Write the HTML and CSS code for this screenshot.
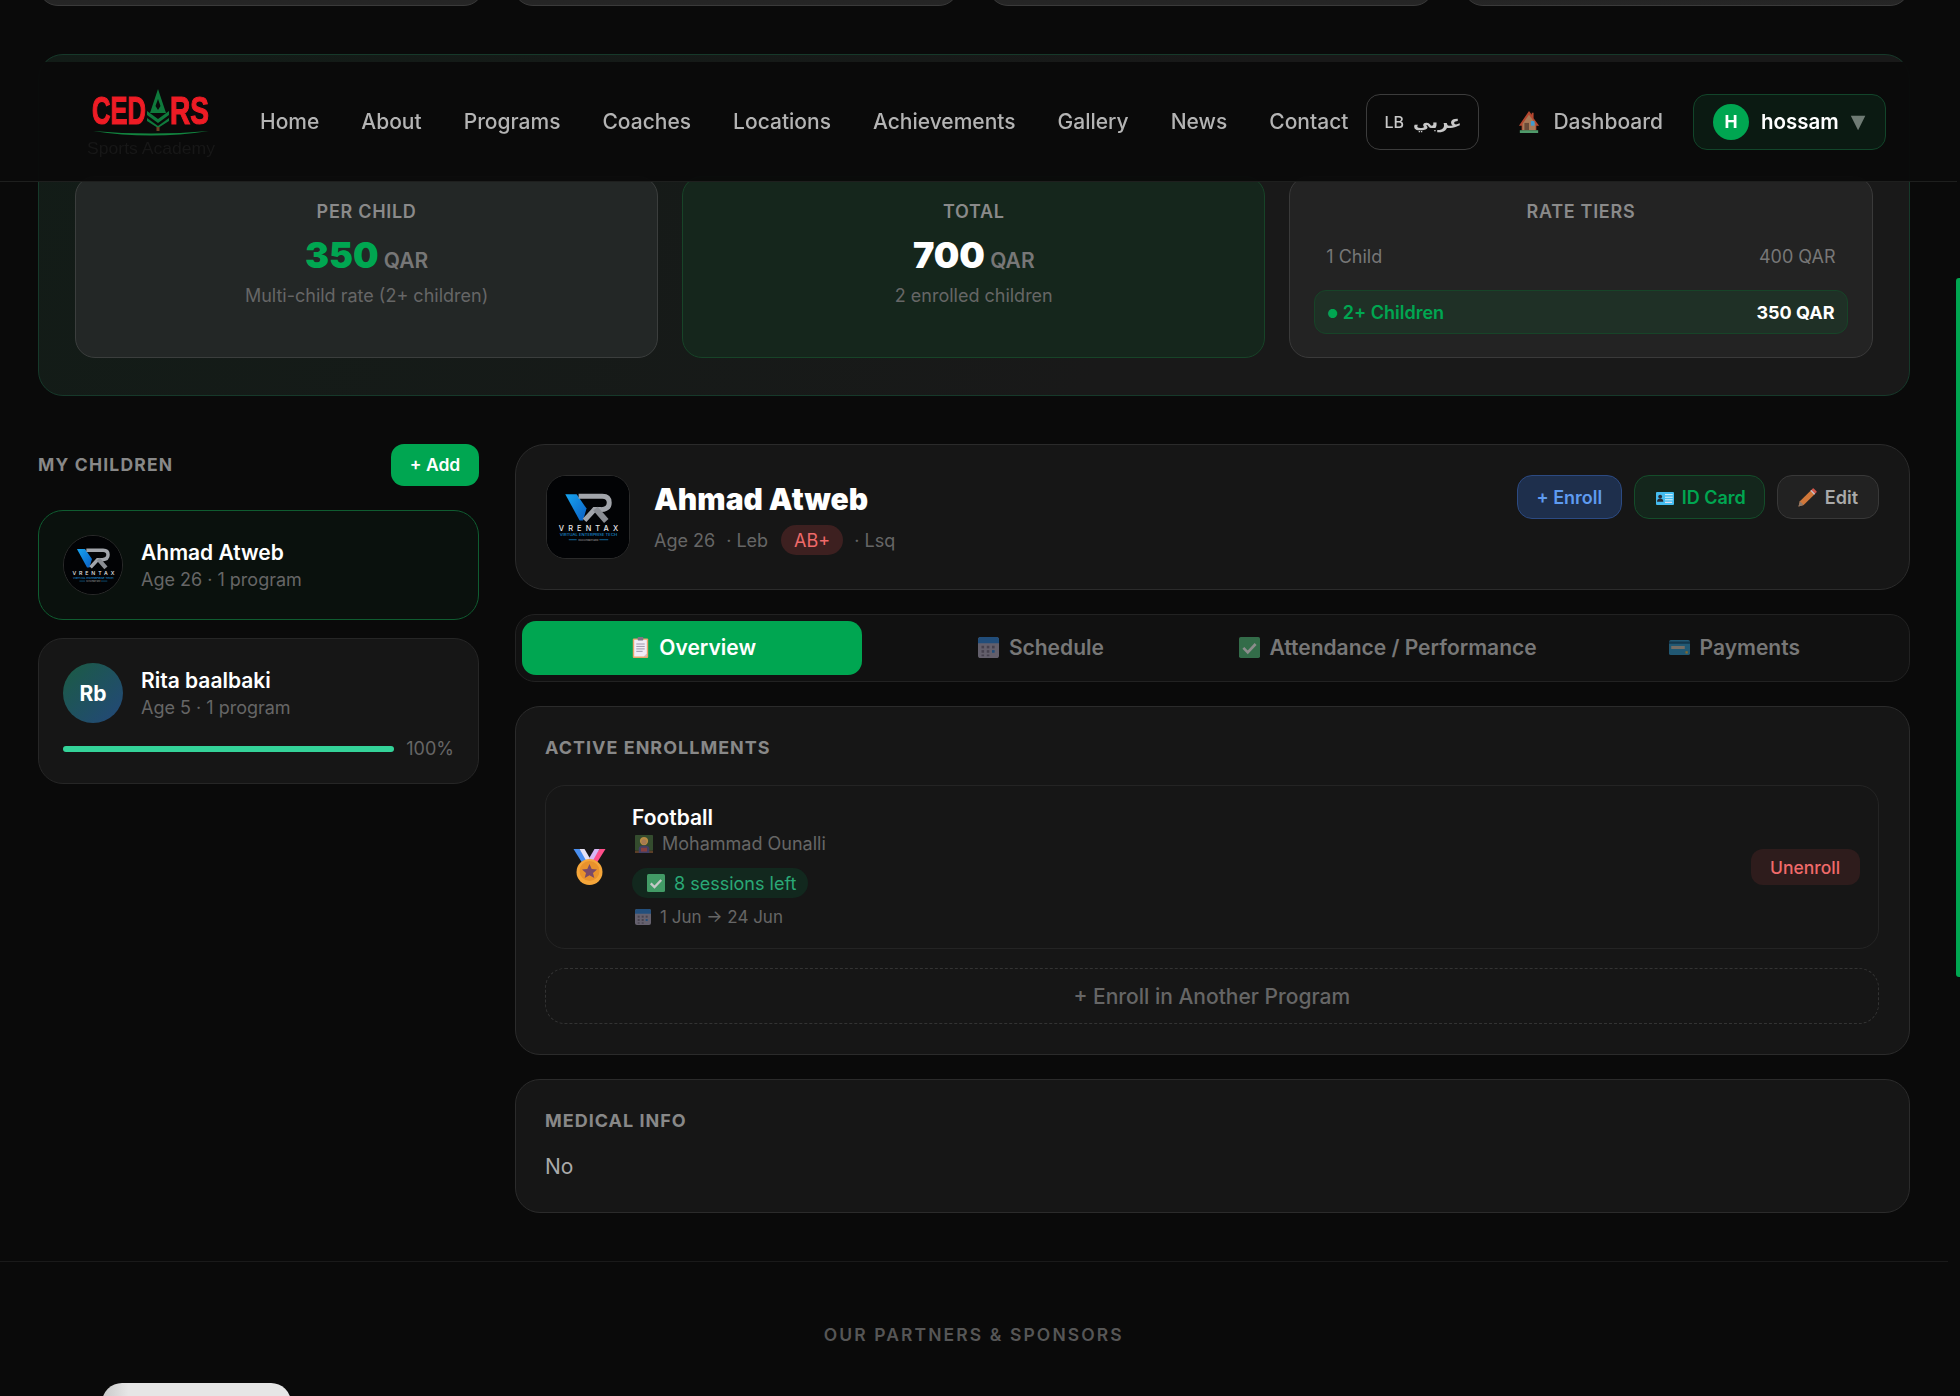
FILE: index.html
```html
<!DOCTYPE html>
<html lang="en">
<head>
    <meta charset="UTF-8">
    <meta name="viewport" content="width=device-width, initial-scale=1.0">
    <title>Cedars Sports Academy - Parent Dashboard</title>
    <link rel="stylesheet" href="styles.css">
</head>
<body>
    <!-- shared icons -->
    <svg class="defs" width="0" height="0">
        <defs>
            <linearGradient id="vrBlue" x1="0" y1="0" x2="1" y2="1">
                <stop offset="0" stop-color="#17a5f0"/>
                <stop offset="1" stop-color="#0b5fc4"/>
            </linearGradient>
            <symbol id="i-vr" viewBox="0 0 83 83">
                <rect width="83" height="83" fill="#020305"/>
                <polygon points="18.5,18.5 30,18.5 40,33 36.5,45 33,45" fill="url(#vrBlue)"/>
                <path d="M32 20.500H56Q63 20.500 63 27Q63 33.500 55 34H48L38 45" fill="none" stroke="#a2a5ab" stroke-width="5"/>
                <path d="M49 33L60 45.500" stroke="#8b8e94" stroke-width="6" fill="none"/>
                <text x="42" y="56" class="vr-name" text-anchor="middle" textLength="60" lengthAdjust="spacing">VRENTAX</text>
                <text x="42" y="61" class="vr-tag" text-anchor="middle" textLength="58" lengthAdjust="spacingAndGlyphs">VIRTUAL ENTERPRISE TECH</text>
                <path d="M22 64.500H30M53 64.500H62" stroke="#1b8fd6" stroke-width="0.700"/>
                <text x="42" y="65.500" class="vr-tag2" text-anchor="middle" textLength="20" lengthAdjust="spacingAndGlyphs">BUILD AUTOMATE GROW</text>
            </symbol>
            <symbol id="i-house" viewBox="0 0 24 24">
                <path d="M12 0L15 4V2H17V8L23 16H20V21H4V16H1Z" fill="#b4472f"/>
                <path d="M12 4L19 14V21H5V14Z" fill="#a97a58"/>
                <rect x="7" y="13" width="5" height="8" fill="#6a4a38"/>
                <rect x="14" y="11" width="4" height="5" fill="#3f9bd1"/>
                <rect x="2" y="21" width="20" height="3" fill="#4f9a6a"/>
            </symbol>
            <symbol id="i-clip" viewBox="0 0 24 30">
                <rect x="1" y="2" width="22" height="28" rx="1.500" fill="#e9a36b"/>
                <path d="M3 4H21V24L17 28H3Z" fill="#f0edf7"/>
                <path d="M21 24V28H17Z" fill="#c9c4d6"/>
                <rect x="8" y="0" width="8" height="5" rx="1" fill="#7d7585"/>
                <path d="M6 10H18M6 13.500H18M6 17H18M6 20.500H15" stroke="#8f89a0" stroke-width="1.200"/>
            </symbol>
            <symbol id="i-cal" viewBox="0 0 24 24">
                <rect width="24" height="24" rx="3" fill="#a79fb6"/>
                <path d="M0 7V3Q0 0 3 0H21Q24 0 24 3V7Z" fill="#2f7fd0"/>
                <g fill="#71697f">
                    <rect x="4" y="10" width="3" height="3"/><rect x="10" y="10" width="3" height="3"/><rect x="16" y="10" width="3" height="3"/>
                    <rect x="4" y="15" width="3" height="3"/><rect x="10" y="15" width="3" height="3"/><rect x="16" y="15" width="3" height="3" fill="#2f7fd0"/>
                    <rect x="4" y="20" width="3" height="2"/><rect x="10" y="20" width="3" height="2"/>
                </g>
            </symbol>
            <symbol id="i-check" viewBox="0 0 24 24">
                <rect width="24" height="24" rx="2" fill="#4fb878"/>
                <path d="M5 12.500L10 17.500L19 8" fill="none" stroke="#f2f2f2" stroke-width="3"/>
            </symbol>
            <symbol id="i-card" viewBox="0 0 28 20">
                <rect y="0" width="28" height="20" rx="2.500" fill="#2f93c4"/>
                <rect y="2" width="28" height="3" fill="#15557c"/>
                <rect x="3" y="8" width="18" height="4" fill="#c8b9a8"/>
                <rect x="22" y="15" width="3" height="3" fill="#e8b13c"/>
            </symbol>
            <symbol id="i-id" viewBox="0 0 28 20">
                <rect width="28" height="20" rx="1.500" fill="#45bdf0"/>
                <circle cx="6.500" cy="7" r="3" fill="#2a2a33"/>
                <path d="M1.500 15Q2 10 6.500 10Q11 10 11.500 15Z" fill="#2a2a33"/>
                <path d="M14 4H26M14 8H26M14 12H26" stroke="#fff" stroke-width="1.300"/>
                <rect x="14" y="15" width="11" height="2" fill="#dde"/>
            </symbol>
            <symbol id="i-pencil" viewBox="0 0 20 20">
                <path d="M0.500 19.500L2 14L13.500 2.500L17.500 6.500L6 18Z" fill="#d0773a"/>
                <path d="M0.500 19.500L2 14L6 18Z" fill="#8f7a6a"/>
                <path d="M13.500 2.500L15.500 0.500Q16 0 16.500 0.500L19.500 3.500Q20 4 19.500 4.500L17.500 6.500Z" fill="#d0564a"/>
                <path d="M13 3L17 7L18 6L14 2Z" fill="#c9c9d2"/>
            </symbol>
            <symbol id="i-medal" viewBox="0 0 32 36">
                <path d="M0 0H6L16 14L10 16Z" fill="#4a8ff0"/>
                <path d="M6 0H11L18 12L14 14Z" fill="#e6e3f5"/>
                <path d="M32 0H26L16 14L22 16Z" fill="#ff4f8a"/>
                <path d="M26 0H21L14 12L18 14Z" fill="#d7b8f5"/>
                <circle cx="16" cy="23" r="13" fill="#f5a63a"/>
                <circle cx="16" cy="22" r="10" fill="#e8922c"/>
                <polygon points="16,15 18.200,20 23.500,20.500 19.500,24 20.800,29 16,26.300 11.200,29 12.500,24 8.500,20.500 13.800,20" fill="#7a4a68"/>
            </symbol>
            <symbol id="i-teacher" viewBox="0 0 24 24">
                <rect width="24" height="21" rx="1" fill="#3c5a34"/>
                <rect y="21" width="24" height="3" fill="#6e4a2c"/>
                <circle cx="12" cy="8" r="5.500" fill="#e0a94f"/>
                <circle cx="12" cy="9" r="3.500" fill="#c99362"/>
                <path d="M5 24V18Q5 14 12 14Q19 14 19 18V24Z" fill="#4e4a78"/>
                <rect x="8" y="17" width="8" height="5" fill="#a34a4a"/>
            </symbol>
        </defs>
    </svg>

    <!-- fixed header, the page behind it is scrolled -->
    <header class="topnav">
        <a class="logo">
            <svg width="130" height="72" viewBox="0 0 130 72">
                <text x="5" y="38" class="logo-word" textLength="54" lengthAdjust="spacingAndGlyphs">CED</text>
                <text x="83" y="38" class="logo-word" textLength="39" lengthAdjust="spacingAndGlyphs">RS</text>
                <path d="M71 3L63 27H79Z" fill="#0f7a3c"/>
                <path d="M71 13L68.500 20L71 24L73.500 20Z" fill="#0a0c0b"/>
                <path d="M60 25L71 33L82 25V29L71 37L60 29Z" fill="#0f7a3c"/>
                <path d="M60 32L71 40L82 32V35L71 42L60 35Z" fill="#0f7a3c"/>
                <rect x="69.500" y="41" width="3" height="4" fill="#6a3f22"/>
                <path d="M6 45Q64 50 122 45Q64 54 6 45Z" fill="#12843f"/>
                <text x="0" y="68" class="logo-sub" textLength="128" lengthAdjust="spacingAndGlyphs">Sports Academy</text>
            </svg>
        </a>
        <nav class="links">
            <a>Home</a>
            <a>About</a>
            <a>Programs</a>
            <a>Coaches</a>
            <a>Locations</a>
            <a>Achievements</a>
            <a>Gallery</a>
            <a>News</a>
            <a>Contact</a>
        </nav>
        <button class="lang"><span class="lang-code">LB</span><span class="lang-ar">عربي</span></button>
        <a class="dash"><svg class="ic-house"><use href="#i-house"/></svg>Dashboard</a>
        <div class="profile">
            <span class="profile-av">H</span>
            <span class="profile-name">hossam</span>
            <span class="profile-caret">▼</span>
        </div>
    </header>

    <div class="thumb"></div>

    <div class="page">
        <div class="stat-row">
            <div class="stat"></div>
            <div class="stat"></div>
            <div class="stat"></div>
            <div class="stat"></div>
        </div>

        <section class="billing">
            <div class="billing-head"></div>
            <div class="billing-grid">
                <div class="bill-card">
                    <div class="bill-label">PER CHILD</div>
                    <div class="bill-value"><b class="green">350</b> <span>QAR</span></div>
                    <div class="bill-note">Multi-child rate (2+ children)</div>
                </div>
                <div class="bill-card total">
                    <div class="bill-label">TOTAL</div>
                    <div class="bill-value"><b>700</b> <span>QAR</span></div>
                    <div class="bill-note">2 enrolled children</div>
                </div>
                <div class="bill-card">
                    <div class="bill-label">RATE TIERS</div>
                    <div class="tier"><span>1 Child</span><span>400 QAR</span></div>
                    <div class="tier on"><span><i class="dot">●</i> 2+ Children</span><b>350 QAR</b></div>
                </div>
            </div>
        </section>

        <div class="columns">
            <aside class="side">
                <div class="side-head">
                    <h3>MY CHILDREN</h3>
                    <button class="add-btn">+ Add</button>
                </div>
                <div class="child on">
                    <div class="child-top">
                        <svg class="child-av logo-av"><use href="#i-vr"/></svg>
                        <div class="child-info">
                            <div class="child-name">Ahmad Atweb</div>
                            <div class="child-sub">Age 26 · 1 program</div>
                        </div>
                    </div>
                </div>
                <div class="child">
                    <div class="child-top">
                        <div class="child-av rb">Rb</div>
                        <div class="child-info">
                            <div class="child-name">Rita baalbaki</div>
                            <div class="child-sub">Age 5 · 1 program</div>
                        </div>
                    </div>
                    <div class="progress">
                        <div class="bar"><div class="fill" style="width:100%"></div></div>
                        <span>100%</span>
                    </div>
                </div>
            </aside>

            <main class="content">
                <section class="hero">
                    <svg class="hero-av"><use href="#i-vr"/></svg>
                    <div class="hero-info">
                        <h1>Ahmad Atweb</h1>
                        <div class="hero-meta">
                            <span>Age 26</span>
                            <span>· Leb</span>
                            <span class="blood">AB+</span>
                            <span>· Lsq</span>
                        </div>
                    </div>
                    <div class="hero-btns">
                        <button class="btn blue">+ Enroll</button>
                        <button class="btn lime"><svg class="ic-id"><use href="#i-id"/></svg>ID Card</button>
                        <button class="btn gray"><svg class="ic-pen"><use href="#i-pencil"/></svg>Edit</button>
                    </div>
                </section>

                <div class="tabs">
                    <button class="tab on"><svg class="ic-clip"><use href="#i-clip"/></svg>Overview</button>
                    <button class="tab"><svg class="ic-tab"><use href="#i-cal"/></svg>Schedule</button>
                    <button class="tab"><svg class="ic-tab"><use href="#i-check"/></svg>Attendance / Performance</button>
                    <button class="tab"><svg class="ic-tab"><use href="#i-card"/></svg>Payments</button>
                </div>

                <section class="panel enrollments">
                    <h3>ACTIVE ENROLLMENTS</h3>
                    <div class="enroll">
                        <svg class="ic-medal"><use href="#i-medal"/></svg>
                        <div class="enroll-body">
                            <div class="enroll-title">Football</div>
                            <div class="enroll-coach"><svg class="ic-coach"><use href="#i-teacher"/></svg>Mohammad Ounalli</div>
                            <div class="sessions"><svg class="ic-sess"><use href="#i-check"/></svg>8 sessions left</div>
                            <div class="enroll-date"><svg class="ic-date"><use href="#i-cal"/></svg>1 Jun → 24 Jun</div>
                        </div>
                        <button class="unenroll">Unenroll</button>
                    </div>
                    <button class="enroll-more">+ Enroll in Another Program</button>
                </section>

                <section class="panel medical">
                    <h3>MEDICAL INFO</h3>
                    <p>No</p>
                </section>
            </main>
        </div>

        <footer class="partners">
            <h4>OUR PARTNERS &amp; SPONSORS</h4>
            <div class="partner-row">
                <div class="partner"></div>
            </div>
        </footer>
    </div>
</body>
</html>
```

FILE: styles.css
```css
*{
    box-sizing: border-box;
}
html, body{
    margin: 0;
    height: 1396px;
    overflow: hidden;
}
body{
    background: #0a0a0a;
    color: #fff;
    font-family: Inter, "Liberation Sans", sans-serif;
}
button{
    font-family: inherit;
    cursor: pointer;
}
h1, h3, h4, p{
    margin: 0;
}
.defs{
    position: absolute;
}
.vr-name{
    font: 500 7.5px Inter, sans-serif;
    fill: #e8e8e8;
}
.vr-tag{
    font: 500 3px Inter, sans-serif;
    fill: #1b8fd6;
}
.vr-tag2{
    font: 500 2px Inter, sans-serif;
    fill: #aaa;
}

/* header */
.topnav{
    position: fixed;
    top: 62px;
    left: 0;
    width: 1957px;
    height: 120px;
    display: flex;
    align-items: center;
    padding: 0 71px 0 87px;
    background: rgba(10,10,10,0.97);
    border-bottom: 1px solid #1e1f1e;
}
.logo{
    width: 173px;
    flex: none;
}
.logo svg{
    display: block;
    overflow: visible;
}
.logo-word{
    font: 700 38px "Liberation Sans", sans-serif;
    fill: #ee1c25;
    stroke: #ee1c25;
    stroke-width: 1.2px;
}
.logo-sub{
    font: 400 17px "Liberation Sans", sans-serif;
    fill: #171717;
}
.links{
    display: flex;
    gap: 42px;
}
.links a{
    font-size: 21px;
    font-weight: 500;
    color: #b4b4b4;
}
.lang{
    margin-left: 18px;
    width: 113px;
    height: 56px;
    background: transparent;
    border: 1px solid #3c3c3c;
    border-radius: 14px;
    color: #c8c8c8;
    display: flex;
    align-items: center;
    justify-content: center;
    gap: 9px;
}
.lang-code{
    font-size: 16px;
    font-weight: 500;
}
.lang-ar{
    font-family: "DejaVu Sans", sans-serif;
    font-size: 18px;
    font-weight: 600;
}
.dash{
    margin-left: 39px;
    display: flex;
    align-items: center;
    gap: 13px;
    font-size: 21px;
    font-weight: 500;
    color: #b4b4b4;
}
.ic-house{
    width: 22px;
    height: 22px;
}
.profile{
    margin-left: 30px;
    width: 193px;
    height: 56px;
    display: flex;
    align-items: center;
    padding-left: 19px;
    background: #0b1a12;
    border: 1px solid #12452a;
    border-radius: 14px;
}
.profile-av{
    width: 36px;
    height: 36px;
    border-radius: 50%;
    background: #00a651;
    display: flex;
    align-items: center;
    justify-content: center;
    font-size: 17.500px;
    font-weight: 700;
}
.profile-name{
    margin-left: 12px;
    font-size: 20.500px;
    font-weight: 600;
}
.profile-caret{
    margin-left: 12px;
    margin-top: -2px;
    font-size: 19px;
    color: #6f7b74;
    font-family: "DejaVu Sans", sans-serif;
}

.thumb{
    position: fixed;
    top: 278px;
    right: 0;
    width: 4px;
    height: 699px;
    background: #00a651;
    border-radius: 3px 0 0 3px;
}

/* page */
.page{
    width: 1947.500px;
    padding: 0 38px;
}
.stat-row{
    display: grid;
    grid-template-columns: repeat(4, 1fr);
    gap: 29px;
    height: 6px;
    align-items: start;
}
/* only the bottom edge of these cards is still on screen */
.stat{
    height: 40px;
    margin-top: -34px;
    background: linear-gradient(#1b1b1b, #262626);
    border: 1px solid #3a3a3a;
    border-radius: 20px;
}

.billing{
    margin-top: 48px;
    padding: 36px;
    height: 342px;
    background: linear-gradient(120deg, #121c17, #191919 60%);
    border: 1px solid #16392a;
    border-radius: 25px;
}
.billing-head{
    height: 85px;
}
.billing-grid{
    display: grid;
    grid-template-columns: repeat(3, 1fr);
    gap: 24px;
}
.bill-card{
    height: 182px;
    padding: 24px;
    background: #232726;
    border: 1px solid #3b3e3d;
    border-radius: 20px;
    text-align: center;
}
.bill-card:last-child{
    background: #232323;
    border-color: #3a3a3a;
}
.bill-card.total{
    background: #15261c;
    border-color: #174428;
}
.bill-label{
    font-size: 18px;
    line-height: 21px;
    font-weight: 600;
    color: #8a8a8a;
    letter-spacing: 0.700px;
}
.bill-value{
    margin-top: 10px;
    line-height: 46px;
    color: #777;
    font-size: 21px;
    font-weight: 600;
}
.bill-value b{
    font-size: 36px;
    font-weight: 900;
    color: #fff;
}
.bill-value b.green{
    color: #00a651;
}
.bill-note{
    margin-top: 1px;
    font-size: 18px;
    line-height: 21px;
    color: #666;
}
.tier{
    margin-top: 12px;
    display: flex;
    justify-content: space-between;
    align-items: center;
    height: 44px;
    padding: 0 12px;
    font-size: 18px;
    color: #777;
}
.tier.on{
    margin-top: 0;
    background: #1f3026;
    border: 1px solid #174428;
    border-radius: 12px;
    color: #00a651;
    font-weight: 600;
}
.tier.on b{
    color: #fff;
    font-weight: 700;
}
.dot{
    font-size: 12px;
    font-style: normal;
    vertical-align: 1px;
}
.bill-label + .tier{
    margin-top: 12px;
    margin-bottom: 12px;
}

.columns{
    margin-top: 48px;
    display: flex;
    gap: 36px;
    align-items: flex-start;
}
.side{
    width: 441px;
    flex: none;
}
.side-head{
    height: 42px;
    display: flex;
    justify-content: space-between;
    align-items: center;
    margin-bottom: 24px;
}
.side-head h3{
    font-size: 17.500px;
    font-weight: 700;
    color: #888;
    letter-spacing: 1.200px;
    margin-top: -2px;
}
.add-btn{
    width: 88px;
    height: 42px;
    padding-bottom: 2px;
    background: #00a651;
    border: 0;
    border-radius: 13px;
    color: #fff;
    font-size: 17.500px;
    font-weight: 600;
}
.child{
    padding: 24px;
    margin-bottom: 18px;
    background: #161616;
    border: 1px solid #262626;
    border-radius: 25px;
}
.child.on{
    height: 110px;
    background: #0a110d;
    border-color: #0f5c30;
}
.child-top{
    display: flex;
    align-items: center;
    gap: 18px;
}
.child-info{
    margin-top: 2px;
}
.child-av{
    width: 60px;
    height: 60px;
    border-radius: 50%;
    flex: none;
}
.logo-av{
    border: 1px solid #2a2a2a;
    background: #020305;
}
.rb{
    background: linear-gradient(135deg, #1b5c43, #23477a);
    display: flex;
    align-items: center;
    justify-content: center;
    font-size: 21px;
    font-weight: 700;
}
.child-name{
    font-size: 21px;
    line-height: 25px;
    font-weight: 600;
}
.child-sub{
    margin-top: 2px;
    font-size: 18px;
    line-height: 25px;
    color: #666;
}
.progress{
    margin-top: 15px;
    display: flex;
    align-items: center;
    gap: 12px;
    font-size: 18px;
    color: #666;
}
.bar{
    flex: 1;
    height: 6px;
    border-radius: 3px;
    background: #2a2a2a;
    overflow: hidden;
}
.fill{
    height: 100%;
    background: #34d399;
}

.content{
    flex: 1;
    min-width: 0;
}
.hero{
    height: 146px;
    padding: 30px;
    display: flex;
    background: #161616;
    border: 1px solid #2b2b2b;
    border-radius: 30px;
}
.hero-av{
    width: 84px;
    height: 84px;
    flex: none;
    border-radius: 20px;
    border: 1px solid #2a2a2a;
    background: #020305;
}
.hero-info{
    margin-left: 24px;
    flex: 1;
}
.hero-info h1{
    margin-top: 6px;
    font-size: 30px;
    line-height: 36px;
    font-weight: 900;
}
.hero-meta{
    margin-top: 8px;
    display: flex;
    align-items: center;
    gap: 11px;
    font-size: 18px;
    color: #666;
}
.blood{
    height: 30px;
    padding: 0 13px;
    margin-left: 2px;
    display: flex;
    align-items: center;
    background: #3d2020;
    color: #f06a6a;
    border-radius: 15px;
}
.hero-btns{
    display: flex;
    gap: 12.500px;
}
.btn{
    height: 44px;
    padding: 0 18.500px;
    display: flex;
    align-items: center;
    gap: 8px;
    font-size: 18px;
    font-weight: 600;
    border-radius: 15px;
    border: 1px solid;
}
.btn.blue{
    background: #1e2f4c;
    border-color: #2c4a82;
    color: #5e9bf0;
}
.btn.lime{
    padding: 0 18px 0 20.500px;
    background: #14261c;
    border-color: #144d2a;
    color: #00a651;
}
.btn.gray{
    padding: 0 19.500px;
    background: #222;
    border-color: #383838;
    color: #aaa;
}
.ic-id{
    width: 18px;
    height: 13px;
    margin-top: 3px;
}
.ic-pen{
    width: 19px;
    height: 19px;
}

.tabs{
    margin-top: 24px;
    height: 68px;
    padding: 6px;
    display: grid;
    grid-template-columns: repeat(4, 1fr);
    gap: 6.250px;
    background: #111;
    border: 1px solid #222;
    border-radius: 20px;
}
.tab{
    display: flex;
    align-items: center;
    justify-content: center;
    gap: 10px;
    padding: 0 0 1px 4px;
    background: transparent;
    border: 0;
    border-radius: 14px;
    color: #777;
    font-size: 21px;
    font-weight: 600;
}
.tab.on{
    background: #00a651;
    color: #fff;
}
.ic-tab{
    width: 21px;
    height: 21px;
    opacity: 0.55;
}
.ic-clip{
    width: 17px;
    height: 21px;
}

.panel{
    margin-top: 24px;
    padding: 29px 30px 29px 29px;
    background: #161616;
    border: 1px solid #2b2b2b;
    border-radius: 25px;
}
.panel h3{
    margin-top: 1px;
    font-size: 18px;
    line-height: 22px;
    font-weight: 700;
    color: #888;
    letter-spacing: 1px;
}
.enrollments{
    height: 349px;
}
.enroll{
    margin-top: 26px;
    height: 164px;
    padding: 0 18px 0 27px;
    display: flex;
    align-items: center;
    border: 1px solid #242424;
    border-radius: 20px;
}
.ic-medal{
    width: 33px;
    height: 36px;
    flex: none;
}
.enroll-body{
    margin-left: 26px;
    flex: 1;
}
.enroll-title{
    font-size: 21px;
    line-height: 24px;
    font-weight: 600;
}
.enroll-coach{
    margin-top: 2px;
    display: flex;
    align-items: center;
    gap: 9px;
    padding-left: 3px;
    font-size: 18px;
    line-height: 24px;
    color: #666;
}
.ic-coach{
    width: 18px;
    height: 18px;
    opacity: 0.8;
}
.sessions{
    margin-top: 12px;
    width: 176px;
    height: 30px;
    display: flex;
    align-items: center;
    gap: 9px;
    padding-left: 15px;
    background: #12281e;
    border-radius: 15px;
    color: #2aa876;
    font-size: 18px;
}
.ic-sess{
    width: 18px;
    height: 18px;
    opacity: 0.8;
}
.enroll-date{
    margin-top: 8px;
    display: flex;
    align-items: center;
    gap: 9px;
    padding-left: 3px;
    font-size: 17px;
    line-height: 22px;
    color: #666;
}
.ic-date{
    width: 16px;
    height: 16px;
    opacity: 0.55;
}
.unenroll{
    width: 109px;
    height: 36px;
    background: #2e1c1c;
    border: 0;
    border-radius: 12px;
    color: #f06a6a;
    font-size: 17.500px;
    font-weight: 500;
}
.enroll-more{
    margin-top: 19px;
    width: 100%;
    height: 56px;
    background: transparent;
    border: 1px dashed #333;
    border-radius: 20px;
    color: #666;
    font-size: 21px;
    font-weight: 500;
}
.medical{
    height: 134px;
}
.medical p{
    margin-top: 23px;
    font-size: 21px;
    line-height: 24px;
    color: #aaa;
}

.partners{
    margin: 48px -38px 0;
    border-top: 1px solid #1a1a1a;
    padding-top: 62.500px;
}
.partners h4{
    text-align: center;
    font-size: 17.500px;
    line-height: 20px;
    font-weight: 600;
    letter-spacing: 2.100px;
    color: #565656;
}
.partner-row{
    margin-top: 38px;
    padding-left: 102px;
    display: flex;
}
.partner{
    width: 189px;
    height: 100px;
    border-radius: 20px;
    background: linear-gradient(90deg, #c9c9c9, #e6e6e6 14%);
}
```
